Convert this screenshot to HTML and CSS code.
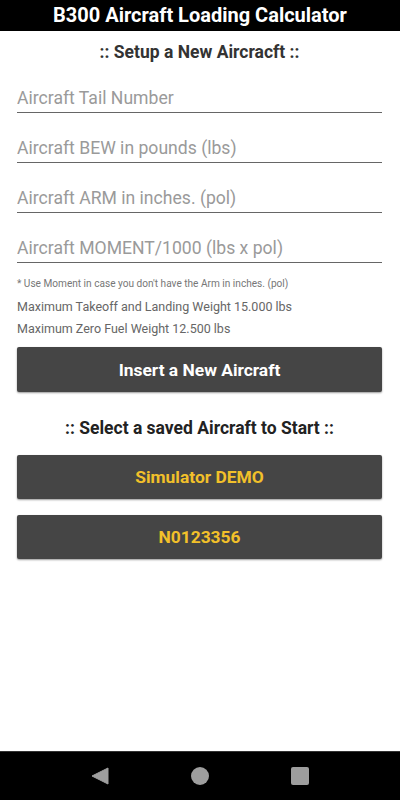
FILE: index.html
```html
<!DOCTYPE html>
<html lang="en">
<head>
  <meta charset="UTF-8">
  <title>B300 Aircraft Loading Calculator</title>
  <link rel="stylesheet" href="styles.css">
</head>
<body>
  <div class="app">
    <div class="title-bar">B300 Aircraft Loading Calculator</div>

    <div class="content">
      <h2 class="section-title">:: Setup a New Aircracft ::</h2>

      <input type="text" class="field" placeholder="Aircraft Tail Number">
      <input type="text" class="field" placeholder="Aircraft BEW in pounds (lbs)">
      <input type="text" class="field" placeholder="Aircraft ARM in inches. (pol)">
      <input type="text" class="field" placeholder="Aircraft MOMENT/1000 (lbs x pol)">

      <p class="note">* Use Moment in case you don't have the Arm in inches. (pol)</p>
      <p class="info first">Maximum Takeoff and Landing Weight 15.000 lbs</p>
      <p class="info">Maximum Zero Fuel Weight 12.500 lbs</p>

      <button class="btn btn-insert">Insert a New Aircraft</button>

      <h2 class="section-title second">:: Select a saved Aircraft to Start ::</h2>

      <button class="btn btn-saved">Simulator DEMO</button>
      <button class="btn btn-saved">N0123356</button>
    </div>

    <div class="nav-bar">
      <svg width="18" height="18" viewBox="0 0 18 18"><path d="M17 1 L17 17 L1 9 Z" fill="#9e9e9e" stroke="#9e9e9e" stroke-width="1" stroke-linejoin="round"/></svg>
      <span class="nav-home"></span>
      <span class="nav-recent"></span>
    </div>
  </div>
</body>
</html>
```

FILE: styles.css
```css
body {
  margin: 0;
  font-family: Roboto, "Liberation Sans", sans-serif;
  background: #fff;
}

.app {
  display: flex;
  flex-direction: column;
  min-height: 800px;
}

.title-bar {
  background: #000;
  color: #fff;
  font-size: 20px;
  font-weight: bold;
  text-align: center;
  height: 31px;
  line-height: 31px;
}

.content {
  padding: 0 18px 0 17px;
  display: flex;
  flex-direction: column;
}

.section-title {
  margin: 10px 0 0;
  font-size: 17.5px;
  line-height: 22px;
  text-align: center;
  color: #333;
}

.section-title.second {
  margin-top: 25px;
  color: #222;
}

.field {
  display: block;
  width: 100%;
  box-sizing: border-box;
  border: none;
  border-bottom: 1.5px solid #666;
  padding: 24px 0 3px;
  font-family: inherit;
  font-size: 17.6px;
  line-height: 22px;
  height: 50px;
  outline: none;
  background: transparent;
}

.field::placeholder {
  color: #9a9a9a;
}

.note {
  margin: 14px 0 0;
  font-size: 10.1px;
  line-height: 14px;
  color: #777;
}

.info {
  margin: 0;
  font-size: 12.5px;
  line-height: 22px;
  color: #666;
}

.info.first {
  margin-top: 5px;
}

.btn {
  display: block;
  width: 100%;
  height: 45px;
  border: none;
  border-radius: 2px;
  background: #454545;
  font-family: inherit;
  font-size: 17.4px;
  font-weight: bold;
  box-shadow: 0 1px 2px rgba(0,0,0,0.4);
  cursor: pointer;
}

.btn-insert {
  margin-top: 7px;
  color: #fff;
}

.btn-saved {
  margin-top: 16px;
  height: 44px;
  color: #f2c02a;
}

.nav-bar {
  margin-top: auto;
  height: 48px;
  background: #000;
  border-top: 1px solid #333;
  display: flex;
  align-items: center;
  justify-content: center;
  gap: 82px;
}

.nav-home {
  width: 18px;
  height: 18px;
  border-radius: 50%;
  background: #9e9e9e;
}

.nav-recent {
  width: 18px;
  height: 18px;
  border-radius: 2px;
  background: #9e9e9e;
}
```
